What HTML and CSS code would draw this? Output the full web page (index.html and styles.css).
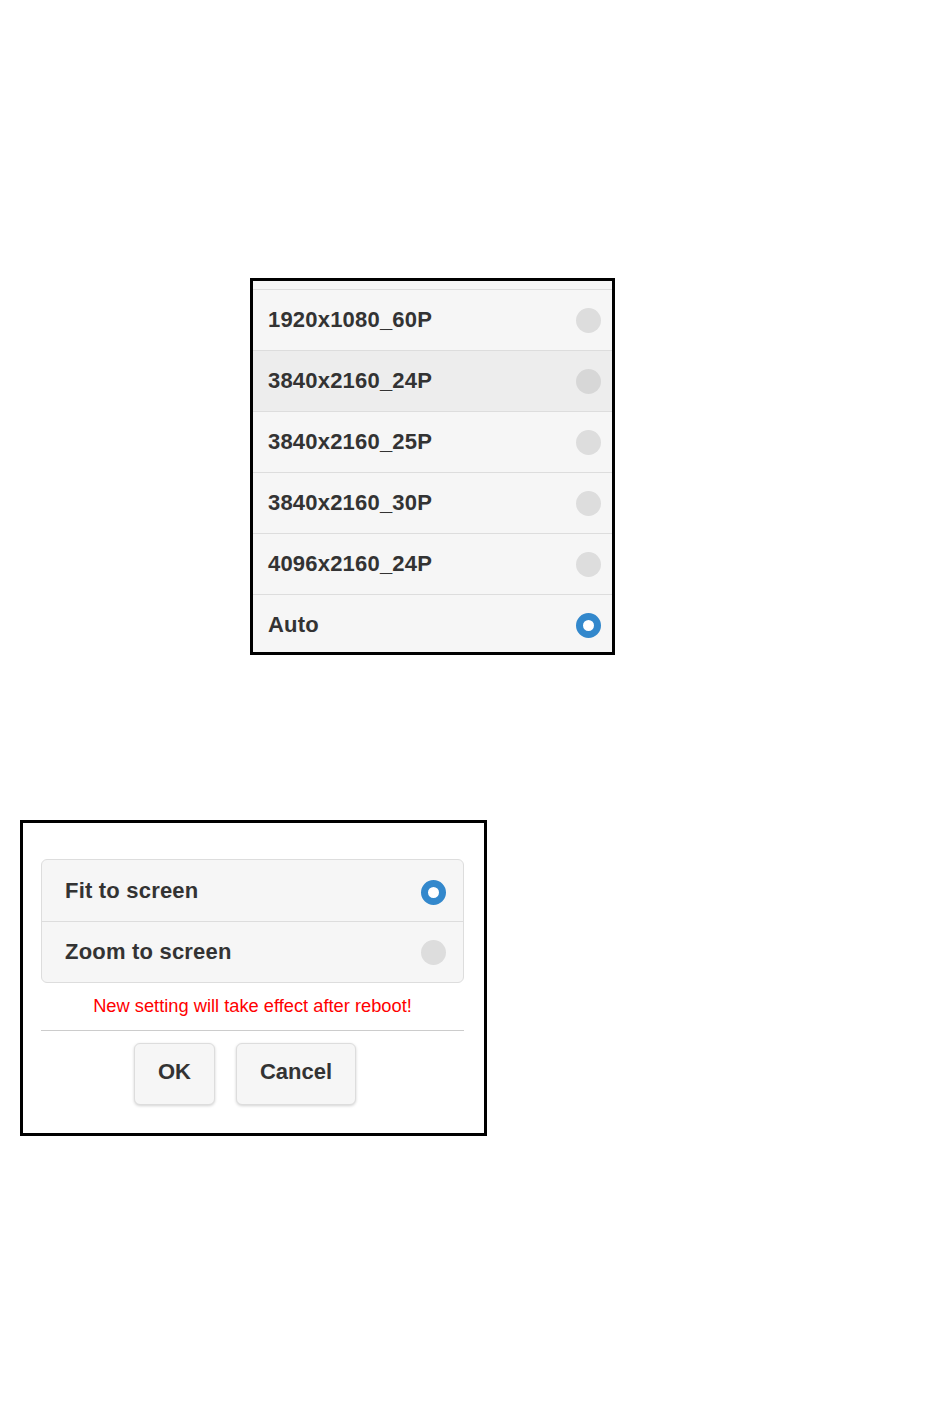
FILE: index.html
```html
<!DOCTYPE html>
<html lang="en">
<head>
<meta charset="utf-8">
<title>Settings</title>
<link rel="stylesheet" href="styles.css">
</head>
<body>
<div class="page">
  <div class="res-box">
    <div class="res-list">
      <div class="res-row res-partial"></div>
      <div class="res-row"><span class="label">1920x1080_60P</span><span class="radio"></span></div>
      <div class="res-row res-hover"><span class="label">3840x2160_24P</span><span class="radio"></span></div>
      <div class="res-row"><span class="label">3840x2160_25P</span><span class="radio"></span></div>
      <div class="res-row"><span class="label">3840x2160_30P</span><span class="radio"></span></div>
      <div class="res-row"><span class="label">4096x2160_24P</span><span class="radio"></span></div>
      <div class="res-row"><span class="label">Auto</span><span class="radio radio-on"></span></div>
    </div>
  </div>

  <div class="dialog">
    <div class="group">
      <div class="group-row group-row-first"><span class="label">Fit to screen</span><span class="radio radio-on"></span></div>
      <div class="group-row group-row-last"><span class="label">Zoom to screen</span><span class="radio"></span></div>
    </div>
    <p class="notice">New setting will take effect after reboot!</p>
    <div class="rule"></div>
    <div class="buttons">
      <button class="btn" type="button">OK</button>
      <button class="btn" type="button">Cancel</button>
    </div>
  </div>
</div>
</body>
</html>
```

FILE: styles.css
```css
html, body {
  margin: 0;
  padding: 0;
  background: #ffffff;
}

body {
  font-family: "Liberation Sans", Arial, Helvetica, sans-serif;
  color: #333333;
}

.page {
  padding-top: 278px;
  display: flex;
  flex-direction: column;
  align-items: flex-start;
}

/* ---------- resolution list ---------- */
.res-box {
  margin-left: 250px;
  width: 359px;
  height: 371px;
  border: 3px solid #000000;
  overflow: hidden;
  background: #f6f6f6;
}

.res-list {
  display: flex;
  flex-direction: column;
}

.res-row {
  flex: none;
  height: 60px;
  border-bottom: 1px solid #dddddd;
  background: #f6f6f6;
  display: flex;
  align-items: center;
  justify-content: space-between;
  padding: 0 11px 0 15px;
}

.res-partial {
  height: 8px;
}

.res-hover {
  background: #ededed;
}

.label {
  font-size: 22px;
  font-weight: bold;
  line-height: 28px;
  letter-spacing: 0.2px;
  color: #333333;
  text-shadow: 0 1px 0 #f3f3f3;
}

.radio {
  width: 25px;
  height: 25px;
  border-radius: 50%;
  background: #dddddd;
  box-sizing: border-box;
  flex: none;
}

.res-hover .radio {
  background: #d7d7d7;
}

.radio-on {
  background: #ffffff;
  border: 7px solid #3388cc;
}

/* ---------- dialog ---------- */
.dialog {
  margin-top: 165px;
  margin-left: 20px;
  width: 423px;
  border: 3px solid #000000;
  padding: 36px 20px 28px 18px;
  background: #ffffff;
}

.group {
  border: 1px solid #dddddd;
  border-radius: 6px;
  overflow: hidden;
  background: #f6f6f6;
}

.group-row {
  display: flex;
  align-items: center;
  justify-content: space-between;
  padding: 0 17px 0 23px;
  height: 60px;
}

.group-row-first {
  height: 61px;
  border-bottom: 1px solid #dddddd;
}

.group-row-first .radio {
  margin-top: 3px;
}

.notice {
  margin: 12px 0 0 0;
  font-size: 18.3px;
  line-height: 22px;
  text-align: center;
  color: #ff0000;
}

.rule {
  margin-top: 13px;
  height: 1px;
  background: #cccccc;
}

.buttons {
  margin-top: 12px;
  display: flex;
  justify-content: center;
  gap: 21px;
  padding-right: 15px;
}

.btn {
  font-family: "Liberation Sans", Arial, Helvetica, sans-serif;
  font-size: 22px;
  font-weight: bold;
  line-height: 28px;
  color: #333333;
  text-shadow: 0 1px 0 #f3f3f3;
  background: #f6f6f6;
  border: 1px solid #dddddd;
  border-radius: 6px;
  padding: 14px 23px 18px 23px;
  margin: 0;
  box-shadow: 0 1px 3px rgba(0, 0, 0, 0.18);
  cursor: pointer;
}
```
